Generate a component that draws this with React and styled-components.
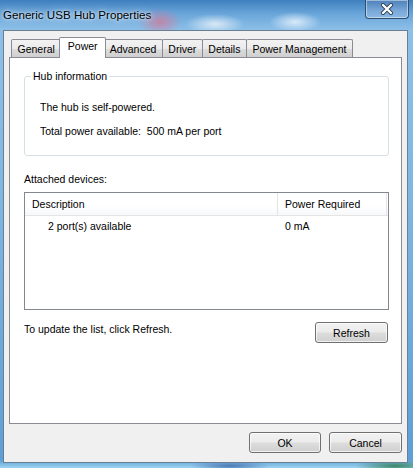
import React from 'react';
import styled, { createGlobalStyle } from 'styled-components';

const GlobalStyle = createGlobalStyle`
  html, body {
    margin: 0;
    padding: 0;
    background: #ffffff;
  }
  body {
    font-family: "Liberation Sans", Arial, sans-serif;
    font-size: 10.5px;
    color: #000000;
  }
`;

const Frame = styled.div`
  width: 413px;
  height: 468px;
  box-sizing: border-box;
  display: flex;
  flex-direction: column;
  background:
    radial-gradient(ellipse 22px 14px at 160px 22px, rgba(214, 120, 150, 0.75), rgba(214, 120, 150, 0) 100%),
    radial-gradient(ellipse 30px 10px at 215px 24px, rgba(255, 255, 255, 0.7), rgba(255, 255, 255, 0) 100%),
    radial-gradient(ellipse 26px 10px at 295px 22px, rgba(240, 248, 255, 0.8), rgba(255, 255, 255, 0) 100%),
    radial-gradient(ellipse 40px 6px at 395px 466px, rgba(40, 120, 70, 0.8), rgba(40, 120, 70, 0) 100%),
    radial-gradient(ellipse 40px 5px at 230px 466px, rgba(50, 90, 160, 0.7), rgba(50, 90, 160, 0) 100%),
    linear-gradient(180deg, #3f7fbf 0px, #6aa6da 14px, #8dc0e8 30px, #7fb6e2 200px, #5d9fd6 460px, #9fd3f0 468px);
`;

const TitleBar = styled.div`
  height: 30px;
  flex: none;
  display: flex;
  justify-content: space-between;
  align-items: flex-start;
  padding: 0 4px 0 3px;
`;

const Title = styled.div`
  font-size: 11.6px;
  line-height: 16px;
  margin-top: 7px;
  color: #000000;
  text-shadow: 0 0 8px rgba(255, 255, 255, 0.9), 0 0 3px rgba(255, 255, 255, 0.9);
`;

const CloseButton = styled.div`
  width: 44px;
  height: 19px;
  box-sizing: border-box;
  border: 1px solid #2f4f6f;
  border-top: none;
  border-radius: 0 0 4px 4px;
  box-shadow: inset 0 0 0 1px rgba(255, 255, 255, 0.45);
  background: linear-gradient(180deg, rgba(80, 130, 185, 0.85), rgba(130, 170, 215, 0.7) 55%, rgba(150, 190, 230, 0.7));
  display: flex;
  align-items: center;
  justify-content: center;
`;

const Client = styled.div`
  flex: 1;
  margin: 0 5px 6px 3px;
  background: #f0f0f0;
  border: 1px solid #6b7f93;
  display: flex;
  flex-direction: column;
  padding: 6px 5px 9px 5px;
`;

const TabStrip = styled.div`
  height: 20px;
  display: flex;
  align-items: flex-end;
  padding-left: 2px;
`;

const Tab = styled.div`
  position: relative;
  box-sizing: border-box;
  height: ${p => (p.$active ? '21px' : '18px')};
  margin-bottom: ${p => (p.$active ? '-1px' : '0')};
  margin-left: ${p => (p.$active ? '-2px' : '-1px')};
  margin-right: ${p => (p.$active ? '-2px' : '0')};
  padding: ${p => (p.$active ? '0 7.5px' : '0 5.5px')};
  z-index: ${p => (p.$active ? 2 : 1)};
  line-height: ${p => (p.$active ? '17px' : '18px')};
  border: 1px solid #898c95;
  border-bottom: ${p => (p.$active ? 'none' : '0')};
  border-radius: 2px 2px 0 0;
  background: ${p => (p.$active
    ? '#ffffff'
    : 'linear-gradient(180deg, #f2f2f2 0%, #ebebeb 50%, #dddddd 51%, #cfcfcf 100%)')};
  white-space: nowrap;

  &:first-child {
    margin-left: 0;
  }
`;

const Panel = styled.div`
  height: 367px;
  box-sizing: border-box;
  background: #ffffff;
  border: 1px solid #898c95;
  display: flex;
  flex-direction: column;
  padding: 12px 12px 0 14px;
`;

const Group = styled.fieldset`
  margin: 0;
  border: 1px solid #d5dfe5;
  border-radius: 3px;
  padding: 0 0 16px 6px;
`;

const Legend = styled.legend`
  padding: 0 2px;
  margin-left: 0;
  line-height: 13px;
  color: #000000;
`;

const InfoLine = styled.div`
  line-height: 16px;
  margin-top: ${p => p.$gap}px;
  margin-left: 9px;
  white-space: pre;
`;

const Label = styled.div`
  line-height: 16px;
  margin-top: 15px;
`;

const ListBox = styled.div`
  margin-top: 5px;
  height: 118px;
  box-sizing: border-box;
  border: 1px solid #828790;
  display: flex;
  flex-direction: column;
`;

const ListHeader = styled.div`
  display: grid;
  grid-template-columns: 253px 109px 1fr;
  height: 22px;
  border-bottom: 1px solid #e5e5e5;
  background: linear-gradient(180deg, #ffffff 0%, #ffffff 60%, #f7f8fa 100%);
`;

const HeaderCell = styled.div`
  line-height: 22px;
  padding-left: 7px;
  border-right: 1px solid #e5e5e5;
  white-space: nowrap;
`;

const ListRow = styled.div`
  display: grid;
  grid-template-columns: 253px 1fr;
  height: 20px;
  line-height: 20px;
`;

const Cell = styled.div`
  padding-left: ${p => p.$indent}px;
  white-space: nowrap;
`;

const FooterRow = styled.div`
  display: flex;
  justify-content: space-between;
  align-items: flex-start;
  margin-top: 11px;
  padding-right: 1px;
`;

const Hint = styled.div`
  line-height: 16px;
`;

const Button = styled.button`
  width: ${p => p.$w}px;
  height: 21px;
  margin-top: ${p => p.$top || 0}px;
  box-sizing: border-box;
  padding: 0;
  font-family: "Liberation Sans", Arial, sans-serif;
  font-size: 10.5px;
  color: #000000;
  border: 1px solid #707070;
  border-radius: 3px;
  background: linear-gradient(180deg, #f2f2f2 0%, #ebebeb 48%, #dddddd 52%, #cfcfcf 100%);
  box-shadow: inset 0 0 0 1px rgba(255, 255, 255, 0.7);
`;

const ButtonRow = styled.div`
  display: flex;
  justify-content: flex-end;
  gap: 8px;
  margin-top: 8px;
`;

const CloseGlyph = () => (
  <svg width="14" height="12" viewBox="0 0 14 12">
    <path d="M3 2 L11 10 M11 2 L3 10" stroke="#2a3f55" strokeWidth="4" strokeLinecap="round" />
    <path d="M3 2 L11 10 M11 2 L3 10" stroke="#ffffff" strokeWidth="2.4" strokeLinecap="round" />
  </svg>
);

const tabs = ['General', 'Power', 'Advanced', 'Driver', 'Details', 'Power Management'];

export default function App() {
  return (
    <>
      <GlobalStyle />
      <Frame>
        <TitleBar>
          <Title>Generic USB Hub Properties</Title>
          <CloseButton>
            <CloseGlyph />
          </CloseButton>
        </TitleBar>
        <Client>
          <TabStrip>
            {tabs.map(t => (
              <Tab key={t} $active={t === 'Power'}>{t}</Tab>
            ))}
          </TabStrip>
          <Panel>
            <Group>
              <Legend>Hub information</Legend>
              <InfoLine $gap={16}>The hub is self-powered.</InfoLine>
              <InfoLine $gap={8}>Total power available:  500 mA per port</InfoLine>
            </Group>
            <Label>Attached devices:</Label>
            <ListBox>
              <ListHeader>
                <HeaderCell>Description</HeaderCell>
                <HeaderCell>Power Required</HeaderCell>
              </ListHeader>
              <ListRow>
                <Cell $indent={23}>2 port(s) available</Cell>
                <Cell $indent={7}>0 mA</Cell>
              </ListRow>
            </ListBox>
            <FooterRow>
              <Hint>To update the list, click Refresh.</Hint>
              <Button $w={73} $top={1}>Refresh</Button>
            </FooterRow>
          </Panel>
          <ButtonRow>
            <Button $w={72}>OK</Button>
            <Button $w={73}>Cancel</Button>
          </ButtonRow>
        </Client>
      </Frame>
    </>
  );
}
